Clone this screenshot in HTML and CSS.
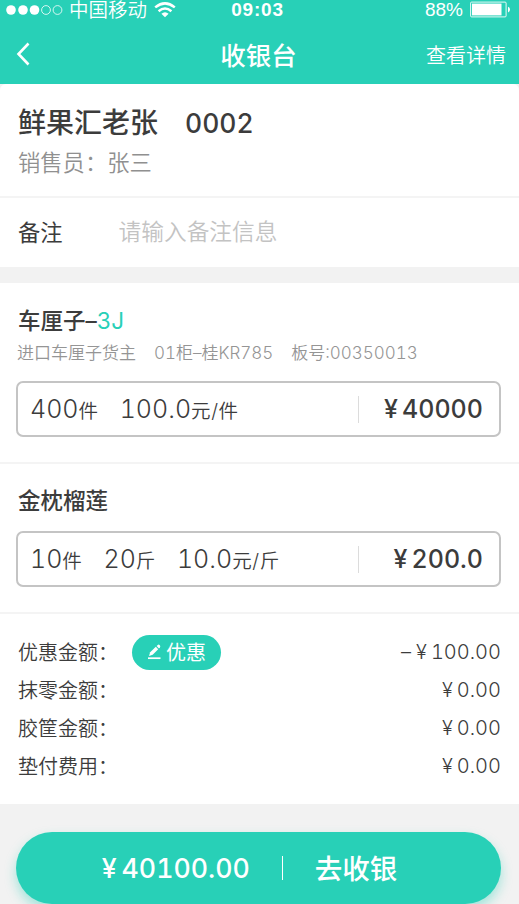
FILE: index.html
```
<!DOCTYPE html>
<html lang="zh-CN">
<head>
    <meta charset="UTF-8">
    <meta name="viewport" content="width=device-width, initial-scale=1.0">
    <title>收银台</title>
    <link rel="stylesheet" href="styles.css">
</head>
<body>

    <header class="header">
        <div class="status-bar">
            <div class="carrier">
                <svg class="signal" width="57" height="12" viewBox="0 0 57 12">
                    <g fill="#fff">
                        <circle cx="5" cy="6" r="4.8"/>
                        <circle cx="17" cy="6" r="4.8"/>
                        <circle cx="28.5" cy="6" r="4.8"/>
                    </g>
                    <g fill="none" stroke="#fff" stroke-width="0.8">
                        <circle cx="40" cy="6" r="4.4"/>
                        <circle cx="51.5" cy="6" r="4.4"/>
                    </g>
                </svg>
                <span class="carrier-name">中国移动</span>
                <svg width="22" height="16" viewBox="0 0 22 16">
                    <g fill="none" stroke="#fff" stroke-width="2.5">
                        <path d="M1.2 5.4 Q11 -2.6 20.8 5.4"/>
                        <path d="M4.6 9.2 Q11 3.8 17.4 9.2"/>
                    </g>
                    <path d="M7.4 11.8 Q11 8.8 14.6 11.8 L11 15.2 Z" fill="#fff"/>
                </svg>
            </div>
            <span class="clock">09:03</span>
            <div class="battery">
                <span>88%</span>
                <svg width="41" height="17" viewBox="0 0 41 17">
                    <rect x="0.6" y="1.1" width="35.5" height="14.8" rx="1" fill="none" stroke="#fff" stroke-width="0.9"/>
                    <rect x="2" y="2.6" width="29.5" height="11.8" fill="#fff"/>
                    <path d="M38 5.8 Q40 6.2 40 8.5 T38 11.4 Z" fill="#fff"/>
                </svg>
            </div>
        </div>
        <nav class="nav">
            <svg class="back" width="14" height="24" viewBox="0 0 14 24">
                <path d="M12.5 1.5 L2.5 12 L12.5 22.5" fill="none" stroke="#fff" stroke-width="2.6"/>
            </svg>
            <h1 class="nav-title">收银台</h1>
            <a class="nav-link">查看详情</a>
        </nav>
    </header>

    <main>
        <section class="customer">
            <h2 class="customer-name">鲜果汇老张<span class="customer-no">0002</span></h2>
            <p class="salesman">销售员：张三</p>
        </section>

        <section class="remark">
            <span>备注</span>
            <span class="placeholder">请输入备注信息</span>
        </section>

        <section class="item">
            <h3 class="item-title">车厘子–<span class="spec">3J</span></h3>
            <p class="item-info"><span>进口车厘子货主</span><span>01柜–桂KR785</span><span>板号:00350013</span></p>
            <div class="item-box">
                <span class="qty">400<small>件</small></span>
                <span class="qty">100.0<small>元/件</small></span>
                <span class="total"><i class="yen">¥</i>40000</span>
            </div>
        </section>

        <section class="item item-short">
            <h3 class="item-title">金枕榴莲</h3>
            <div class="item-box">
                <span class="qty">10<small>件</small></span>
                <span class="qty">20<small>斤</small></span>
                <span class="qty">10.0<small>元/斤</small></span>
                <span class="total"><i class="yen">¥</i>200.0</span>
            </div>
        </section>

        <section class="summary">
            <div class="row">
                <span class="label">优惠金额<span>：</span></span>
                <button class="discount">
                    <svg width="15" height="16" viewBox="0 0 15 16">
                        <path d="M2 12 L3.2 8.2 L8.8 2.8 L11.2 5.2 L5.7 10.8 Z" fill="#fff"/>
                        <path d="M9.6 2 L10.8 0.9 Q11.8 0.2 12.8 1.2 Q13.7 2.2 13 3.2 L12 4.4 Z" fill="#fff"/>
                        <path d="M1 14.2 H13.5" stroke="#fff" stroke-width="1.7"/>
                    </svg>
                    <span>优惠</span>
                </button>
                <span class="money"><span class="minus">–</span><i class="yen">¥</i>100.00</span>
            </div>
            <div class="row">
                <span class="label">抹零金额<span>：</span></span>
                <span class="money"><i class="yen">¥</i>0.00</span>
            </div>
            <div class="row">
                <span class="label">胶筐金额<span>：</span></span>
                <span class="money"><i class="yen">¥</i>0.00</span>
            </div>
            <div class="row">
                <span class="label">垫付费用<span>：</span></span>
                <span class="money"><i class="yen">¥</i>0.00</span>
            </div>
        </section>
    </main>

    <footer class="footer">
        <button class="pay">
            <span class="pay-amount"><i class="yen">¥</i>40100.00</span>
            <span class="pay-line"></span>
            <span class="pay-text">去收银</span>
        </button>
    </footer>

</body>
</html>
```
FILE: styles.css
```
* {
    box-sizing: border-box;
}
body {
    margin: 0;
    height: 904px;
    overflow: hidden;
    background: #f2f2f2;
    color: #3c3c3c;
    font-family: Inter, "Noto Sans CJK SC", sans-serif;
    font-variant-numeric: tabular-nums;
}
h1, h2, h3, p {
    margin: 0;
}
svg {
    display: block;
    flex-shrink: 0;
}
button {
    border: none;
    padding: 0;
    color: #fff;
    background: #28d0b7;
    font-family: inherit;
    font-variant-numeric: inherit;
}
.yen {
    font-style: normal;
}

/* header */
.header {
    height: 84px;
    background: #28d0b7;
    color: #fff;
}
.status-bar {
    display: grid;
    grid-template-columns: 1fr auto 1fr;
    align-items: center;
    height: 18px;
    padding: 0 8px 0 6px;
    font-size: 19.5px;
    line-height: 18px;
}
.carrier, .battery {
    display: flex;
    align-items: center;
}
.carrier-name {
    margin: 0 7px 0 6px;
    padding-top: 1px;
    font-weight: 350;
}
.clock {
    padding-right: 2px;
    font-family: "Liberation Sans", sans-serif;
    font-size: 19px;
    font-weight: bold;
    letter-spacing: 0.8px;
}
.battery {
    justify-content: flex-end;
    gap: 7px;
    font-family: "Liberation Sans", sans-serif;
    font-size: 19px;
}
.nav {
    display: grid;
    grid-template-columns: 1fr auto 1fr;
    align-items: center;
    height: 60px;
    margin-top: 6px;
    padding: 0 13px 0 16px;
}
.nav-title {
    padding: 0 5px 2px 0;
    font-size: 25.5px;
    font-weight: 500;
}
.nav-link {
    justify-self: end;
    font-size: 20px;
    font-weight: 350;
}

/* customer */
.customer {
    height: 114px;
    padding: 19px 18px 0;
    background: #fff;
    border-bottom: 2px solid #f4f4f4;
    border-radius: 6px 6px 0 0;
}
.customer-name {
    font-size: 28px;
    font-weight: 500;
    line-height: 40px;
}
.customer-no {
    margin-left: 27px;
    font-size: 26.5px;
    font-weight: 450;
}
.salesman {
    color: #909090;
    font-size: 22.3px;
    font-weight: 350;
    line-height: 39px;
}
.remark {
    display: flex;
    align-items: center;
    height: 69px;
    padding: 0 18px 4px;
    background: #fff;
    font-size: 22.3px;
}
.placeholder {
    margin-left: 56px;
    color: #c3c3c3;
    font-size: 22.7px;
    font-weight: 350;
}

/* goods */
.item {
    height: 181px;
    margin-top: 16px;
    padding: 18px 18px 0 16px;
    background: #fff;
    border-bottom: 2px solid #f4f4f4;
}
.item-short {
    height: 150px;
    margin-top: 0;
    padding-top: 17px;
}
.item-title {
    padding-left: 2px;
    font-size: 22.5px;
    font-weight: 500;
    line-height: 39px;
}
.spec {
    color: #28d0b7;
    font-weight: 400;
}
.item-info {
    display: flex;
    gap: 18px;
    padding-left: 1px;
    color: #959595;
    font-size: 17px;
    font-weight: 350;
    line-height: 26px;
}
.item-box {
    display: flex;
    align-items: center;
    height: 56px;
    margin-top: 15px;
    padding: 0 16px 0 12px;
    border: 2px solid #c4c4c4;
    border-radius: 7px;
}
.item-short .item-box {
    margin-top: 11px;
}
.qty {
    margin-right: 21px;
    padding-top: 1px;
    font-size: 25px;
    font-weight: 350;
    line-height: 40px;
}
.qty small {
    font-size: 19.5px;
    letter-spacing: 0.6px;
}
.total {
    width: 125px;
    margin-left: auto;
    border-left: 1px solid #dcdcdc;
    font-size: 25px;
    font-weight: 450;
    line-height: 27px;
    text-align: right;
}
.total .yen {
    margin-right: 4px;
}

/* summary */
.summary {
    height: 190px;
    padding: 19px 18px 0;
    background: #fff;
}
.row {
    display: flex;
    align-items: center;
    height: 38px;
    font-size: 20px;
    font-weight: 350;
}
.label {
    width: 114px;
    padding-bottom: 2px;
}
.discount {
    display: flex;
    align-items: center;
    justify-content: center;
    gap: 4px;
    width: 89px;
    height: 35px;
    padding-bottom: 1px;
    border-radius: 18px;
    font-size: 20px;
}
.money {
    margin-left: auto;
}
.money .yen {
    margin-right: 4px;
}
.minus {
    margin-right: 5px;
}

/* pay button */
.footer {
    padding: 28px 18px 0 16px;
}
.pay {
    display: flex;
    align-items: center;
    justify-content: center;
    width: 100%;
    height: 72px;
    padding-right: 18px;
    border-radius: 36px;
    box-shadow: 0 6px 12px rgba(40, 208, 183, 0.4);
    font-size: 27px;
    font-weight: 500;
}
.pay-amount {
    font-size: 26.7px;
    font-weight: 450;
}
.pay .yen {
    margin-right: 5px;
}
.pay-text {
    font-size: 27.5px;
    padding-bottom: 2px;
}
.pay-line {
    width: 1px;
    height: 24px;
    margin: 0 32px;
    background: #fff;
}
```
